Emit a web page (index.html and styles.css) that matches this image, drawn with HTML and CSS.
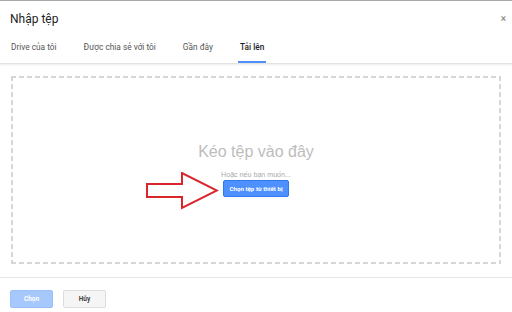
FILE: index.html
```html
<!DOCTYPE html>
<html lang="vi">
<head>
<meta charset="utf-8">
<link rel="stylesheet" href="styles.css">
</head>
<body>
<div class="dialog">
  <header class="header">
    <h1 class="title">Nhập tệp</h1>
    <span class="close">×</span>
  </header>
  <nav class="tabs">
    <span class="tab">Drive của tôi</span>
    <span class="tab">Được chia sẻ với tôi</span>
    <span class="tab">Gần đây</span>
    <span class="tab active">Tải lên</span>
  </nav>
  <main class="content">
    <div class="dropzone">
      <div class="drop-title">Kéo tệp vào đây</div>
      <div class="drop-sub">Hoặc nếu bạn muốn...</div>
      <div class="pick-wrap">
        <svg class="arrow" width="73" height="38" viewBox="0 0 73 38">
          <polygon points="1,12 36,12 36,1 71,18.5 36,36 36,25 1,25" fill="#fff" stroke="#d8262c" stroke-width="2" stroke-linejoin="miter"/>
        </svg>
        <button class="pick-btn">Chọn tệp từ thiết bị</button>
      </div>
    </div>
  </main>
  <footer class="footer">
    <button class="btn btn-primary">Chọn</button>
    <button class="btn btn-cancel">Hủy</button>
  </footer>
</div>
</body>
</html>
```
FILE: styles.css
```css
* { box-sizing: border-box; }
html, body { margin: 0; padding: 0; background: #fff; }
body {
  width: 512px;
  height: 312px;
  overflow: hidden;
  font-family: Roboto, "Liberation Sans", Arial, sans-serif;
  color: #444;
}
.dialog {
  display: flex;
  flex-direction: column;
  height: 312px;
  border-top: 1px solid #a8a8a8;
}
.header {
  height: 33px;
  display: flex;
  align-items: center;
  justify-content: space-between;
  padding: 2px 6px 0 10px;
}
.title {
  margin: 0;
  font-size: 12px;
  font-weight: 400;
  color: #222;
}
.close {
  font-size: 10px;
  color: #777;
  line-height: 1;
}
.tabs {
  height: 30px;
  display: flex;
  align-items: stretch;
  gap: 23px;
  padding-left: 9px;
  border-bottom: 1px solid #e3e3e3;
  box-shadow: 0 1px 2px rgba(0,0,0,0.08);
}
.tab {
  display: flex;
  align-items: center;
  padding: 0 2px 2px;
  font-size: 8.3px;
  color: #555;
  border-bottom: 2px solid transparent;
}
.tab.active {
  color: #222;
  font-weight: 500;
  border-bottom-color: #4d90fe;
}
.content {
  flex: 1;
  padding: 12px 11px 13px;
  border-bottom: 1px solid #e5e5e5;
}
.dropzone {
  height: 188px;
  display: flex;
  flex-direction: column;
  align-items: center;
  padding-top: 66px;
  background:
    repeating-linear-gradient(90deg, #d6d6d6 0 5px, transparent 5px 8px) top left / 100% 2px no-repeat,
    repeating-linear-gradient(90deg, #d6d6d6 0 5px, transparent 5px 8px) bottom left / 100% 2px no-repeat,
    repeating-linear-gradient(180deg, #d6d6d6 0 5px, transparent 5px 8px) top left / 2px 100% no-repeat,
    repeating-linear-gradient(180deg, #d6d6d6 0 5px, transparent 5px 8px) top right / 2px 100% no-repeat;
}
.drop-title {
  font-family: "Liberation Sans", Arial, sans-serif;
  font-size: 16px;
  color: #bdbdbd;
  line-height: 20px;
}
.drop-sub {
  margin-top: 9px;
  font-family: "Liberation Sans", Arial, sans-serif;
  font-size: 7.1px;
  color: #aaa;
  line-height: 9px;
}
.pick-wrap {
  position: relative;
  margin-top: 0;
}
.arrow {
  position: absolute;
  right: calc(100% + 4px);
  top: -8px;
}
.pick-btn {
  display: block;
  height: 17px;
  padding: 0 5px;
  border: 1px solid #3079ed;
  border-radius: 2px;
  background: #4d90fe;
  color: #fff;
  font-family: inherit;
  font-size: 6.2px;
  font-weight: 700;
}
.footer {
  height: 34px;
  display: flex;
  align-items: flex-start;
  gap: 10px;
  padding: 12px 10px 0;
}
.btn {
  width: 43px;
  height: 18px;
  border-radius: 2px;
  font-family: inherit;
  font-size: 6.5px;
  font-weight: 700;
}
.btn-primary {
  background: #a6c8fc;
  border: 1px solid #9bbff7;
  color: #fff;
}
.btn-cancel {
  background: #f5f5f5;
  border: 1px solid #dcdcdc;
  color: #444;
}
```
